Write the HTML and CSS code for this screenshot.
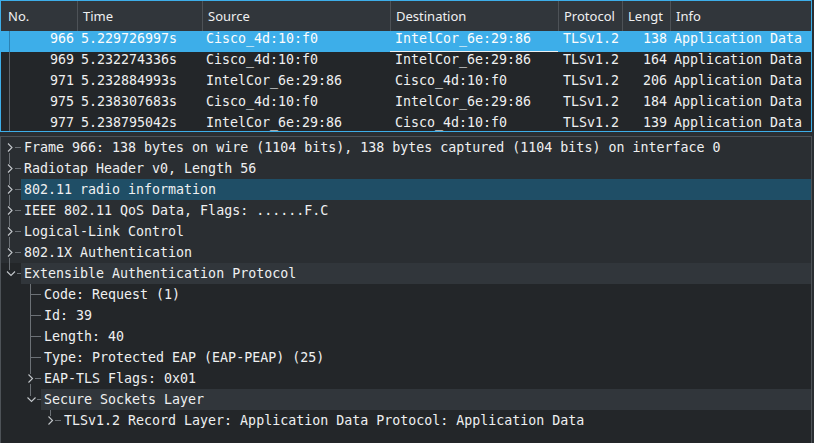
FILE: index.html
```html
<!DOCTYPE html>
<html>
<head>
<meta charset="utf-8">
<link rel="stylesheet" href="styles.css">
</head>
<body>
<div class="app">
  <div class="packets">
    <div class="phead">
      <div class="hc">No.</div>
      <div class="hc">Time</div>
      <div class="hc">Source</div>
      <div class="hc">Destination</div>
      <div class="hc">Protocol</div>
      <div class="hc">Lengt</div>
      <div class="hc">Info</div>
    </div>
    <div class="prow sel">
      <div class="c no r">966</div><div class="c">5.229726997s</div><div class="c">Cisco_4d:10:f0</div><div class="c d cur">IntelCor_6e:29:86</div><div class="c d">TLSv1.2</div><div class="c r">138</div><div class="c">Application Data</div>
    </div>
    <div class="prow">
      <div class="c no r">969</div><div class="c">5.232274336s</div><div class="c">Cisco_4d:10:f0</div><div class="c d">IntelCor_6e:29:86</div><div class="c d">TLSv1.2</div><div class="c r">164</div><div class="c">Application Data</div>
    </div>
    <div class="prow">
      <div class="c no r">971</div><div class="c">5.232884993s</div><div class="c">IntelCor_6e:29:86</div><div class="c d">Cisco_4d:10:f0</div><div class="c d">TLSv1.2</div><div class="c r">206</div><div class="c">Application Data</div>
    </div>
    <div class="prow">
      <div class="c no r">975</div><div class="c">5.238307683s</div><div class="c">Cisco_4d:10:f0</div><div class="c d">IntelCor_6e:29:86</div><div class="c d">TLSv1.2</div><div class="c r">184</div><div class="c">Application Data</div>
    </div>
    <div class="prow">
      <div class="c no r">977</div><div class="c">5.238795042s</div><div class="c">IntelCor_6e:29:86</div><div class="c d">Cisco_4d:10:f0</div><div class="c d">TLSv1.2</div><div class="c r">139</div><div class="c">Application Data</div>
    </div>
  </div>

  <div class="details">
    <div class="trow upper">
      <svg width="20" height="21"><path class="tl" d="M8.5 15.5V21M13.5 10.5H20"/><path class="ch" d="M7 6.5L11 10.5L7 14.5"/></svg>
      <div class="lbl">Frame 966: 138 bytes on wire (1104 bits), 138 bytes captured (1104 bits) on interface 0</div>
    </div>
    <div class="trow upper">
      <svg width="20" height="21"><path class="tl" d="M8.5 0V5.5M8.5 15.5V21M13.5 10.5H20"/><path class="ch" d="M7 6.5L11 10.5L7 14.5"/></svg>
      <div class="lbl">Radiotap Header v0, Length 56</div>
    </div>
    <div class="trow upper">
      <svg width="20" height="21"><path class="tl" d="M8.5 0V5.5M8.5 15.5V21M13.5 10.5H20"/><path class="ch" d="M7 6.5L11 10.5L7 14.5"/></svg>
      <div class="lbl sel">802.11 radio information</div>
    </div>
    <div class="trow upper">
      <svg width="20" height="21"><path class="tl" d="M8.5 0V5.5M8.5 15.5V21M13.5 10.5H20"/><path class="ch" d="M7 6.5L11 10.5L7 14.5"/></svg>
      <div class="lbl">IEEE 802.11 QoS Data, Flags: ......F.C</div>
    </div>
    <div class="trow upper">
      <svg width="20" height="21"><path class="tl" d="M8.5 0V5.5M8.5 15.5V21M13.5 10.5H20"/><path class="ch" d="M7 6.5L11 10.5L7 14.5"/></svg>
      <div class="lbl">Logical-Link Control</div>
    </div>
    <div class="trow upper">
      <svg width="20" height="21"><path class="tl" d="M8.5 0V5.5M8.5 15.5V21M13.5 10.5H20"/><path class="ch" d="M7 6.5L11 10.5L7 14.5"/></svg>
      <div class="lbl">802.1X Authentication</div>
    </div>
    <div class="trow">
      <svg width="20" height="21"><path class="tl" d="M8.5 0V7M15.5 10.5H20"/><path class="ch" d="M6 8.5L10 12.5L14 8.5"/></svg>
      <div class="lbl hl">Extensible Authentication Protocol</div>
    </div>
    <div class="trow">
      <svg width="40" height="21"><path class="tl" d="M29.5 0V21M30 10.5H40"/></svg>
      <div class="lbl">Code: Request (1)</div>
    </div>
    <div class="trow">
      <svg width="40" height="21"><path class="tl" d="M29.5 0V21M30 10.5H40"/></svg>
      <div class="lbl">Id: 39</div>
    </div>
    <div class="trow">
      <svg width="40" height="21"><path class="tl" d="M29.5 0V21M30 10.5H40"/></svg>
      <div class="lbl">Length: 40</div>
    </div>
    <div class="trow">
      <svg width="40" height="21"><path class="tl" d="M29.5 0V21M30 10.5H40"/></svg>
      <div class="lbl">Type: Protected EAP (EAP-PEAP) (25)</div>
    </div>
    <div class="trow">
      <svg width="40" height="21"><path class="tl" d="M29.5 0V5.5M29.5 15.5V21M33.5 10.5H40"/><path class="ch" d="M27.5 6.5L31.5 10.5L27.5 14.5"/></svg>
      <div class="lbl">EAP-TLS Flags: 0x01</div>
    </div>
    <div class="trow">
      <svg width="40" height="21"><path class="tl" d="M29.5 0V7M35.5 10.5H40"/><path class="ch" d="M26.5 8.5L30.5 12.5L34.5 8.5"/></svg>
      <div class="lbl hl">Secure Sockets Layer</div>
    </div>
    <div class="trow">
      <svg width="60" height="21"><path class="tl" d="M49.5 0V5.5M53.5 10.5H60"/><path class="ch" d="M47.5 6.5L51.5 10.5L47.5 14.5"/></svg>
      <div class="lbl">TLSv1.2 Record Layer: Application Data Protocol: Application Data</div>
    </div>
  </div>
</div>
</body>
</html>
```

FILE: styles.css
```css
* { box-sizing: border-box; margin: 0; padding: 0; }
html, body { width: 814px; height: 443px; overflow: hidden; }
body {
  background: #2a2e32;
  color: #eff0f1;
  font-family: "DejaVu Sans Mono", monospace;
}
.app {
  display: flex;
  flex-direction: column;
  gap: 4px;
  width: 812px;
  height: 443px;
}
.packets {
  flex: none;
  height: 132px;
  border: 1px solid #3daee9;
  background: #232629;
  overflow: hidden;
}
.phead, .prow {
  display: grid;
  grid-template-columns: 76px 125px 188px 168px 64px 48px 1fr;
}
.phead {
  height: 30px;
  background: #31363b;
  font-family: "Noto Sans", sans-serif;
  font-size: 13px;
}
.hc {
  line-height: 30px;
  padding-left: 5px;
  border-left: 1px solid #4d5257;
  white-space: nowrap;
  overflow: hidden;
}
.hc:first-child { border-left: 0; padding-left: 7px; }
.prow {
  height: 21px;
  font-size: 13.3px;
  line-height: 15px;
  white-space: pre;
}
.c { padding-left: 4px; overflow: hidden; }
.c.d { padding-left: 5px; }
.c.r { text-align: right; padding-left: 0; padding-right: 3px; }
.c.no {
  background: linear-gradient(to right, transparent 8px, #5d6268 8px, #5d6268 9px, transparent 9px);
}
.prow.sel { background: #3daee9; color: #fcfcfc; }
.prow.sel .c.no {
  background: linear-gradient(to right, transparent 8px, #2b82b3 8px, #2b82b3 9px, transparent 9px);
}
.c.cur { border-bottom: 1px solid #eff0f1; }

.details {
  flex: 1;
  border: 1px solid #4d5257;
  border-bottom: 0;
  background: #232629;
  overflow: hidden;
}
.trow {
  display: flex;
  height: 21px;
  line-height: 21px;
  font-size: 13.3px;
  white-space: pre;
}
.trow.upper { background: #2a2e32; }
.trow svg { flex: none; display: block; }
.tl { stroke: #6c7176; stroke-width: 1; fill: none; shape-rendering: crispEdges; }
.ch { stroke: #c4c8cc; stroke-width: 1.1; fill: none; }
.lbl { flex: 1; padding-left: 3px; overflow: hidden; }
.lbl.sel { background: #1f4e66; }
.lbl.hl { background: #31363b; }
```
